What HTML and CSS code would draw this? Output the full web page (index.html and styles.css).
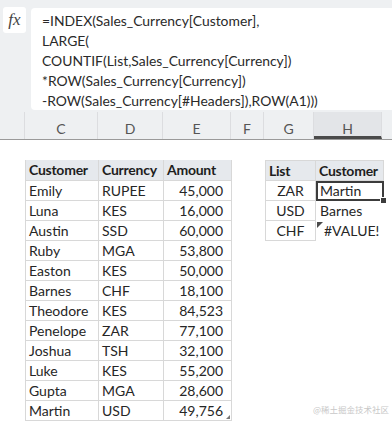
FILE: index.html
```html
<!DOCTYPE html>
<html>
<head>
<meta charset="utf-8">
<link rel="stylesheet" href="styles.css">
</head>
<body>
<div class="formula-bar">
  <div class="fx">fx</div>
  <div class="formula">
    <div>=INDEX(Sales_Currency[Customer],</div>
    <div>LARGE(</div>
    <div>COUNTIF(List,Sales_Currency[Currency])</div>
    <div>*ROW(Sales_Currency[Currency])</div>
    <div>-ROW(Sales_Currency[#Headers]),ROW(A1)))</div>
  </div>
</div>
<div class="col-headers">
  <div class="ch corner"></div>
  <div class="ch c">C</div>
  <div class="ch d">D</div>
  <div class="ch e">E</div>
  <div class="ch f">F</div>
  <div class="ch g">G</div>
  <div class="ch h sel">H</div>
  <div class="ch rest"></div>
</div>
<div class="sheet">
  <div class="spacer-a"></div>
  <table class="sales">
    <tr class="hd"><td class="c">Customer</td><td class="d">Currency</td><td class="e">Amount</td></tr>
    <tr><td>Emily</td><td>RUPEE</td><td class="num">45,000</td></tr>
    <tr><td>Luna</td><td>KES</td><td class="num">16,000</td></tr>
    <tr><td>Austin</td><td>SSD</td><td class="num">60,000</td></tr>
    <tr><td>Ruby</td><td>MGA</td><td class="num">53,800</td></tr>
    <tr><td>Easton</td><td>KES</td><td class="num">50,000</td></tr>
    <tr><td>Barnes</td><td>CHF</td><td class="num">18,100</td></tr>
    <tr><td>Theodore</td><td>KES</td><td class="num">84,523</td></tr>
    <tr><td>Penelope</td><td>ZAR</td><td class="num">77,100</td></tr>
    <tr><td>Joshua</td><td>TSH</td><td class="num">32,100</td></tr>
    <tr><td>Luke</td><td>KES</td><td class="num">55,200</td></tr>
    <tr><td>Gupta</td><td>MGA</td><td class="num">28,600</td></tr>
    <tr><td>Martin</td><td>USD</td><td class="num last">49,756<span class="resize"></span></td></tr>
  </table>
  <div class="spacer-f"></div>
  <table class="list">
    <tr class="hd"><td class="g">List</td><td class="h">Customer</td></tr>
    <tr><td class="cur">ZAR</td><td class="res active">Martin<span class="handle"></span></td></tr>
    <tr><td class="cur">USD</td><td class="res">Barnes</td></tr>
    <tr><td class="cur">CHF</td><td class="res err"><span class="tri"></span>#VALUE!</td></tr>
  </table>
</div>
<div class="watermark">@稀土掘金技术社区</div>
</body>
</html>
```

FILE: styles.css
```css
html, body {
  margin: 0;
  padding: 0;
  background: #ffffff;
  width: 392px;
  height: 428px;
  overflow: hidden;
  position: relative;
  font-family: Lato, "Liberation Sans", sans-serif;
  color: #262626;
}

.formula-bar {
  background: #eef0f2;
  height: 112px;
  display: flex;
  align-items: flex-start;
  padding: 7px 0 0 3px;
  box-sizing: border-box;
  gap: 5px;
}

.fx {
  width: 23px;
  height: 26px;
  background: #ffffff;
  border-radius: 3px;
  font-family: "Liberation Serif", "DejaVu Serif", serif;
  font-style: italic;
  font-size: 17px;
  color: #444;
  display: flex;
  align-items: center;
  justify-content: center;
  padding-bottom: 1px;
  box-sizing: border-box;
}

.formula {
  flex: 1;
  background: #ffffff;
  border-radius: 4px 0 0 4px;
  height: 102px;
  margin-top: 1px;
  padding: 3px 0 0 11px;
  box-sizing: border-box;
  font-size: 13.9px;
  line-height: 20px;
  color: #2a2a2a;
}

.col-headers {
  display: flex;
  height: 28px;
  background: #eef0f2;
  border-bottom: 1px solid #9a9a9a;
  box-sizing: border-box;
}

.ch {
  display: flex;
  align-items: center;
  justify-content: center;
  font-size: 14px;
  color: #555;
  border-right: 1px solid #dcdde0;
  box-sizing: border-box;
  padding-top: 5px;
}
.ch.corner { width: 25px; }
.ch.c { width: 73px; }
.ch.d { width: 65px; }
.ch.e { width: 68px; }
.ch.f { width: 33px; }
.ch.g { width: 50px; }
.ch.h { width: 68px; }
.ch.rest { flex: 1; border-right: none; }
.ch.sel {
  background: #e3e5e8;
  border-bottom: 3px solid #4a4a4a;
  padding-top: 8px;
}

.sheet {
  display: flex;
  align-items: flex-start;
  padding-top: 20px;
}

.spacer-a { width: 25px; flex: none; }
.spacer-f { width: 33px; flex: none; }

table {
  border-collapse: collapse;
  font-size: 14px;
  flex: none;
}

td {
  height: 20px;
  padding: 0 0 0 3px;
  border: 1px solid #d8d8d8;
  box-sizing: border-box;
  line-height: 19px;
  white-space: nowrap;
  position: relative;
}

tr.hd td {
  background: #e6e9ed;
  font-weight: bold;
  color: #1e1e1e;
  letter-spacing: -0.25px;
}

.sales td:nth-child(1) { width: 73px; }
.sales td:nth-child(2) { width: 65px; }
.sales td:nth-child(3) { width: 68px; }
.sales tr:first-child td { border-top: none; }

td.num {
  text-align: right;
  padding: 0 8px 0 0;
}

.resize {
  position: absolute;
  right: 1px;
  bottom: 1px;
  width: 0;
  height: 0;
  border-left: 4px solid transparent;
  border-bottom: 4px solid #777;
}

.list td.g { width: 50px; }
.list td.h { width: 68px; }
.list td.cur {
  text-align: center;
  padding: 0;
}
.list td.res {
  border: none;
  padding-left: 4px;
}
.list td.active {
  outline: 2px solid #3c3c3c;
  outline-offset: -2px;
}
.handle {
  position: absolute;
  right: -3px;
  bottom: -3px;
  width: 5px;
  height: 5px;
  background: #3c3c3c;
  border: 1px solid #fff;
}
.list td.err { padding-left: 8px; }
.tri {
  position: absolute;
  left: 1px;
  top: 1px;
  width: 0;
  height: 0;
  border-top: 6px solid #4a4a4a;
  border-right: 6px solid transparent;
}

.watermark {
  position: absolute;
  right: 3px;
  bottom: 13px;
  font-family: "Noto Sans CJK SC", sans-serif;
  font-size: 8.5px;
  color: #c8c8c8;
}
```
